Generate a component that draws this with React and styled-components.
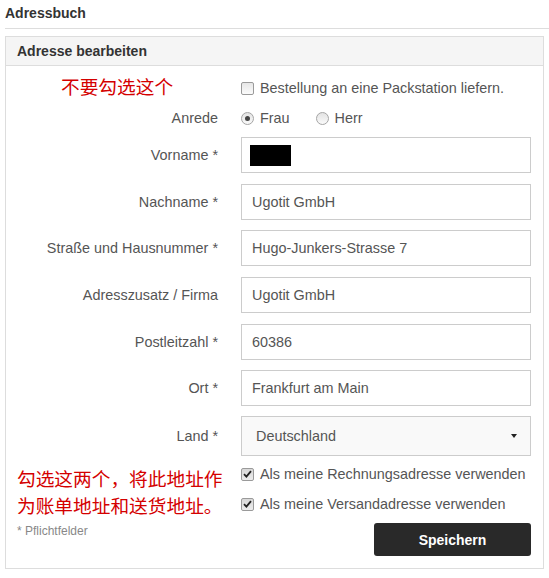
import React from 'react'
import styled, { createGlobalStyle } from 'styled-components'

const GlobalStyle = createGlobalStyle`
  body {
    margin: 0;
    background: #fff;
    font-family: 'Liberation Sans', Arial, sans-serif;
    color: #555;
  }
`

const PageTitle = styled.h2`
  margin: 0 0 0 5px;
  height: 29px;
  box-sizing: border-box;
  padding-top: 5px;
  font-size: 14px;
  line-height: 17px;
  font-weight: bold;
  color: #333;
  border-bottom: 1px solid #ddd;
`

const Panel = styled.div`
  margin: 7px 0 0 5px;
  width: 539px;
  box-sizing: border-box;
  border: 1px solid #ddd;
`

const PanelHeader = styled.div`
  height: 28px;
  padding-left: 11px;
  display: flex;
  align-items: center;
  background: #f5f5f5;
  border-bottom: 1px solid #ddd;
  font-size: 14px;
  font-weight: bold;
  color: #333;
`

const PanelBody = styled.div`
  padding: 12px 11px 12px 11px;
`

const Row = styled.div`
  display: grid;
  grid-template-columns: 201px 290px;
  column-gap: 23px;
  align-items: center;
  height: ${(p) => p.$h}px;
  margin-top: ${(p) => p.$mt || 0}px;
`

const Label = styled.label`
  text-align: right;
  font-size: 14.4px;
  color: #555;
  white-space: nowrap;
`

const Note = styled.div`
  align-self: start;
  padding-left: ${(p) => p.$indent || 0}px;
  font-family: 'Noto Sans CJK SC', sans-serif;
  font-size: 18.7px;
  line-height: ${(p) => p.$lh}px;
  color: #d40000;
  white-space: nowrap;
`

const Input = styled.div`
  height: 36px;
  box-sizing: border-box;
  border: 1px solid #ccc;
  padding: 0 10px;
  display: flex;
  align-items: center;
  font-size: 14.4px;
  color: #555;
  background: #fff;
`

const Redacted = styled.span`
  display: block;
  width: 41px;
  height: 21px;
  margin-left: -2px;
  background: #000;
`

const Select = styled.div`
  height: 40px;
  box-sizing: border-box;
  border: 1px solid #ccc;
  background: #f9f9f9;
  padding: 0 13px 0 14px;
  display: flex;
  align-items: center;
  justify-content: space-between;
  font-size: 14.4px;
  color: #555;
`

const Caret = styled.span`
  width: 0;
  height: 0;
  border-left: 3.5px solid transparent;
  border-right: 3.5px solid transparent;
  border-top: 4px solid #222;
`

const Options = styled.div`
  display: flex;
  align-items: center;
  gap: ${(p) => p.$gap || 0}px;
`

const Choice = styled.span`
  height: 20px;
  display: flex;
  align-items: center;
  gap: 6px;
  font-size: 14.4px;
  color: #555;
  white-space: nowrap;
`

const Box = styled.span`
  width: 13px;
  height: 13px;
  box-sizing: border-box;
  border: 1px solid #9a9a9a;
  border-radius: 2px;
  background: ${(p) => (p.$checked ? 'linear-gradient(#d8d8d8, #ececec)' : 'linear-gradient(#e6e6e6, #fbfbfb)')};
  display: flex;
  align-items: center;
  justify-content: center;
  flex-shrink: 0;
`

const Radio = styled.span`
  width: 13px;
  height: 13px;
  box-sizing: border-box;
  border: 1px solid #a5a5a5;
  border-radius: 50%;
  background: linear-gradient(#e3e3e3, #fafafa);
  display: flex;
  align-items: center;
  justify-content: center;
  flex-shrink: 0;
  &::after {
    content: '';
    display: ${(p) => (p.$checked ? 'block' : 'none')};
    width: 5px;
    height: 5px;
    border-radius: 50%;
    background: #444;
  }
`

const Stack = styled.div`
  display: flex;
  flex-direction: column;
  gap: 10px;
`

const Bottom = styled.div`
  display: grid;
  grid-template-columns: 201px 290px;
  column-gap: 23px;
  align-items: start;
  height: 50px;
  margin-top: 8px;
`

const Hint = styled.span`
  align-self: start;
  margin-top: 1px;
  font-size: 12px;
  line-height: 14px;
  color: #888;
`

const SaveButton = styled.button`
  justify-self: end;
  width: 157px;
  height: 33px;
  border: none;
  border-radius: 3px;
  background: #292929;
  color: #fff;
  font-family: 'Liberation Sans', Arial, sans-serif;
  font-size: 14px;
  font-weight: bold;
  cursor: pointer;
`

const CheckBox = ({ checked, children }) => (
  <Choice>
    <Box $checked={checked}>
      {checked && (
        <svg width="9" height="8" viewBox="0 0 9 8">
          <path d="M1 4.2 L3.4 6.6 L8 1.2" fill="none" stroke="#222" strokeWidth="1.8" />
        </svg>
      )}
    </Box>
    {children}
  </Choice>
)

const fields = [
  { label: 'Nachname *', value: 'Ugotit GmbH' },
  { label: 'Straße und Hausnummer *', value: 'Hugo-Junkers-Strasse 7' },
  { label: 'Adresszusatz / Firma', value: 'Ugotit GmbH' },
  { label: 'Postleitzahl *', value: '60386' },
  { label: 'Ort *', value: 'Frankfurt am Main' },
]

const App = () => {
  return (
    <>
      <GlobalStyle />
      <PageTitle>Adressbuch</PageTitle>
      <Panel>
        <PanelHeader>Adresse bearbeiten</PanelHeader>
        <PanelBody>
          <Row $h={20}>
            <Note $lh={15} $indent={44}>不要勾选这个</Note>
            <CheckBox>Bestellung an eine Packstation liefern.</CheckBox>
          </Row>

          <Row $h={20} $mt={10}>
            <Label>Anrede</Label>
            <Options $gap={26}>
              <Choice><Radio $checked />Frau</Choice>
              <Choice><Radio />Herr</Choice>
            </Options>
          </Row>

          <Row $h={36} $mt={9}>
            <Label>Vorname *</Label>
            <Input><Redacted /></Input>
          </Row>

          {fields.map((f) => (
            <Row key={f.label} $h={36} $mt={10.67}>
              <Label>{f.label}</Label>
              <Input>{f.value}</Input>
            </Row>
          ))}

          <Row $h={40} $mt={10}>
            <Label>Land *</Label>
            <Select>
              Deutschland
              <Caret />
            </Select>
          </Row>

          <Bottom>
            <Note $lh={27}>
              勾选这两个，将此地址作<br />为账单地址和送货地址。
            </Note>
            <Stack>
              <CheckBox checked>Als meine Rechnungsadresse verwenden</CheckBox>
              <CheckBox checked>Als meine Versandadresse verwenden</CheckBox>
            </Stack>
          </Bottom>

          <Row $h={33} $mt={9}>
            <Hint>* Pflichtfelder</Hint>
            <SaveButton>Speichern</SaveButton>
          </Row>
        </PanelBody>
      </Panel>
    </>
  )
}

export default App
